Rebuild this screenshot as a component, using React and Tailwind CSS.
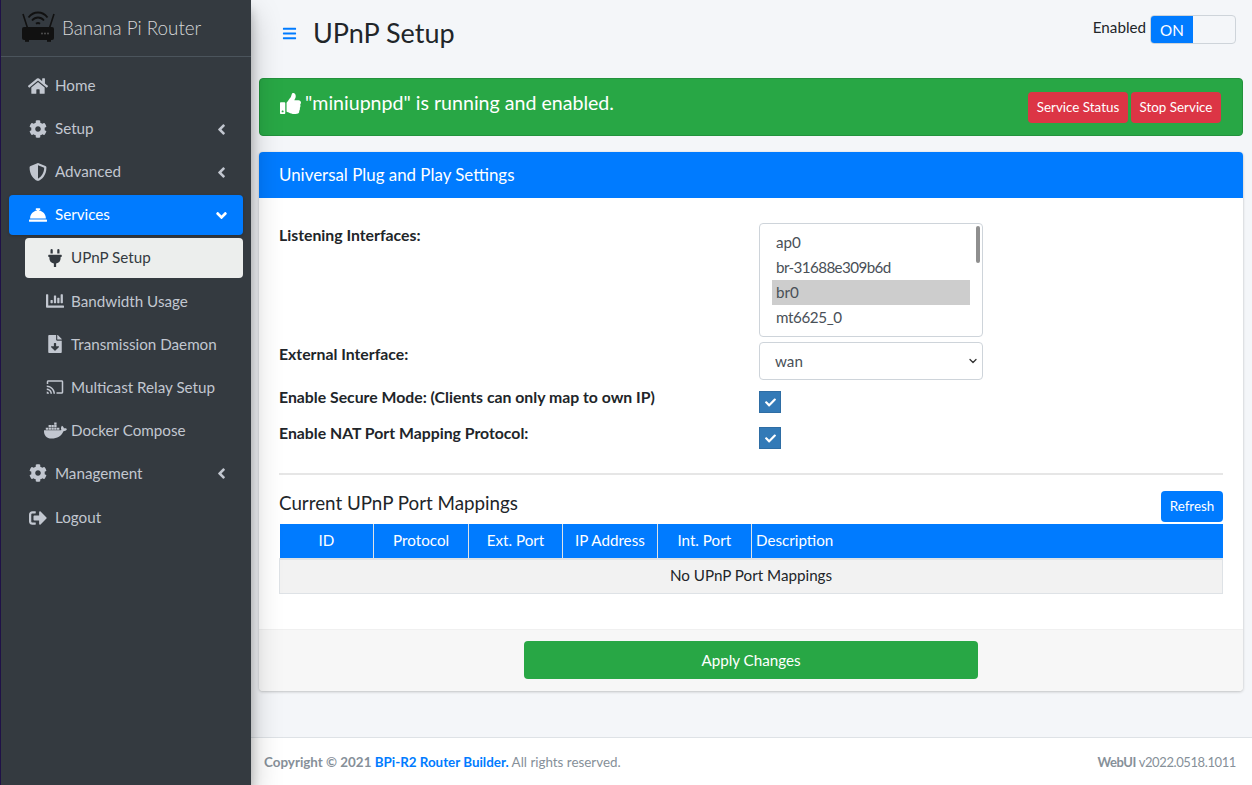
import { FaHome, FaCog, FaShieldAlt, FaConciergeBell, FaPlug, FaChartBar, FaFileDownload, FaChromecast, FaDocker, FaSignOutAlt, FaThumbsUp, FaBars, FaAngleLeft, FaAngleDown, FaCheck } from 'react-icons/fa';
import { ChevronDown } from 'lucide-react';

function RouterLogo() {
  return (
    <svg width="34" height="31" viewBox="0 0 34 31" className="shrink-0 -mt-[3px]">
      <path d="M1 3 L5.5 17 M32 3 L27.5 17" stroke="#111" strokeWidth="1.6" fill="none" />
      <path d="M6.5 6.5 C11.5 -0.2 20.5 -0.2 25.5 6.5" stroke="#111" strokeWidth="1.8" fill="none" />
      <path d="M10 9.5 C13.5 5.5 18.5 5.5 22 9.5" stroke="#111" strokeWidth="1.8" fill="none" />
      <path d="M14 12.8 C15.4 11.6 16.6 11.6 18 12.8" stroke="#111" strokeWidth="1.8" fill="none" />
      <rect x="0" y="16" width="32" height="13" rx="2" fill="#111" />
      <rect x="3" y="29" width="4" height="1.8" fill="#111" />
      <rect x="25" y="29" width="4" height="1.8" fill="#111" />
      <circle cx="20" cy="22.5" r="0.9" fill="#555" />
      <circle cx="23" cy="22.5" r="0.9" fill="#555" />
      <circle cx="26" cy="22.5" r="0.9" fill="#555" />
    </svg>
  );
}

function NavItem({ icon: Icon, label, arrow, iconClass = 'text-[18px]', labelClass = 'pb-[2px]', className = '' }) {
  return (
    <div className={`h-10 mb-[3px] ml-2 mr-2 rounded flex items-center pl-5 pr-[13px] text-[#c2c7d0] ${className}`}>
      <span className="w-[26px] shrink-0 flex"><Icon className={iconClass} /></span>
      <span className={`flex-1 ${labelClass}`}>{label}</span>
      {arrow && <FaAngleLeft className="text-[17px]" />}
    </div>
  );
}

function SubItem({ icon: Icon, label, active, iconClass = 'text-[18px]' }) {
  return (
    <div className={`h-10 mb-[3px] ml-6 mr-2 rounded flex items-center ${active ? 'bg-[#eceeed] text-[#343a40]' : 'text-[#c2c7d0]'}`}>
      <span className="w-[46px] shrink-0 flex justify-center pl-[14px]"><Icon className={iconClass} /></span>
      <span className={active ? 'pb-[2px]' : ''}>{label}</span>
    </div>
  );
}

function Sidebar() {
  return (
    <aside className="w-[251px] shrink-0 bg-[#343a40] border-l border-[#1f1147] shadow-[0_14px_28px_rgba(0,0,0,0.25),0_10px_10px_rgba(0,0,0,0.22)] z-10">
      <div className="h-[57px] border-b border-[#4b545c] flex items-center pl-[21px] gap-[6px] text-[18.8px] font-light text-[rgba(255,255,255,0.8)]">
        <RouterLogo />
        <span className="pb-[1px] font-light">Banana Pi Router</span>
      </div>
      <nav className="pt-[9px]">
        <NavItem icon={FaHome} label="Home" iconClass="text-[20px] -ml-[1px]" />
        <NavItem icon={FaCog} label="Setup" arrow />
        <NavItem icon={FaShieldAlt} label="Advanced" arrow />
        <div className="h-10 mb-[3px] ml-2 mr-2 rounded bg-[#007bff] text-white flex items-center pl-5 pr-[13px] shadow-[0_1px_3px_rgba(0,0,0,0.2)]">
          <span className="w-[26px] shrink-0 flex"><FaConciergeBell className="text-[18px]" /></span>
          <span className="flex-1 pb-[2px]">Services</span>
          <FaAngleDown className="text-[17px]" />
        </div>
        <SubItem icon={FaPlug} label="UPnP Setup" active />
        <SubItem icon={FaChartBar} label="Bandwidth Usage" />
        <SubItem icon={FaFileDownload} label="Transmission Daemon" />
        <SubItem icon={FaChromecast} label="Multicast Relay Setup" />
        <SubItem icon={FaDocker} label="Docker Compose" iconClass="text-[23px]" />
        <NavItem icon={FaCog} label="Management" arrow labelClass="" className="mb-[5px]" />
        <NavItem icon={FaSignOutAlt} label="Logout" labelClass="pb-[2px]" />
      </nav>
    </aside>
  );
}

function CheckBox() {
  return (
    <span className="w-[22px] h-[22px] bg-[#337ab7] border border-[#2e6da4] flex items-center justify-center text-white">
      <FaCheck className="text-[11px]" />
    </span>
  );
}

function Label({ children, className = '' }) {
  return <div className={`w-[480px] shrink-0 font-bold text-[15.8px] ${className}`}>{children}</div>;
}

export default function App() {
  const headers = ['ID', 'Protocol', 'Ext. Port', 'IP Address', 'Int. Port'];
  return (
    <div className="h-screen flex overflow-hidden bg-[#f4f6f9] text-[#212529] text-[15.2px] leading-6 font-['Lato',sans-serif]">
      <Sidebar />
      <main className="flex-1 flex flex-col min-w-0">
        {/* Header */}
        <div className="h-[78px] shrink-0 flex pl-[31px] pr-4">
          <div className="flex items-center h-[66px] flex-1">
            <FaBars className="text-[15px] text-[#007bff] mr-[16px]" />
            <h1 className="text-[27px] leading-[34px]">UPnP Setup</h1>
          </div>
          <div className="flex items-start pt-[15px]">
            <span className="mr-1 leading-[24px]">Enabled</span>
            <div className="w-[86px] h-[29px] border border-[#ced4da] rounded flex overflow-hidden">
              <span className="w-[42px] bg-[#007bff] text-white flex items-center justify-center">ON</span>
            </div>
          </div>
        </div>

        <div className="pl-2 pr-[9px]">
          {/* Status */}
          <div className="h-[58px] bg-[#28a745] border border-[#23923d] rounded flex items-center justify-between pl-5 pr-[21px] text-white">
            <div className="flex items-center gap-1 text-[19.6px] -mt-[8px]">
              <FaThumbsUp className="text-[21px]" />
              <span>"miniupnpd" is running and enabled.</span>
            </div>
            <div className="flex gap-[3px]">
              <button className="h-[31px] w-[100px] bg-[#dc3545] rounded text-[13.4px]">Service Status</button>
              <button className="h-[31px] w-[90px] bg-[#dc3545] rounded text-[13.4px]">Stop Service</button>
            </div>
          </div>

          {/* Settings card */}
          <section className="mt-4 h-[539px] bg-white rounded shadow-[0_0_1px_rgba(0,0,0,0.125),0_1px_3px_rgba(0,0,0,0.2)] flex flex-col overflow-hidden">
            <div className="h-[46px] shrink-0 bg-[#007bff] text-white flex items-center px-5 text-[16.9px]">Universal Plug and Play Settings</div>
            <div className="flex-1 px-5 pt-[25px]">
              <div className="flex">
                <Label>Listening Interfaces:</Label>
                <div className="relative w-[224px] h-[114px] border border-[#ced4da] rounded pt-[6px] pl-3 text-[#495057]">
                  <div className="h-[25px] pl-1 leading-[24px]">ap0</div>
                  <div className="h-[25px] pl-1 leading-[24px] tracking-[-0.6px]">br-31688e309b6d</div>
                  <div className="h-[25px] pl-1 leading-[24px] w-[198px] bg-[#cdcdcd]">br0</div>
                  <div className="h-[25px] pl-1 leading-[24px] tracking-[-0.4px]">mt6625_0</div>
                  <div className="absolute right-[2px] top-[2px] w-[4px] h-[37px] rounded bg-[#8f8f8f]" />
                </div>
              </div>
              <div className="flex mt-[5px] items-start">
                <Label>External Interface:</Label>
                <div className="relative w-[224px] h-[38px]">
                  <select className="w-full h-full appearance-none border border-[#ced4da] rounded bg-white pl-[15px] pb-[1px] text-[#495057]" defaultValue="wan">
                    <option>wan</option>
                    <option>br0</option>
                  </select>
                  <ChevronDown size={12} strokeWidth={2.6} className="absolute right-[4px] top-[13px] text-[#333] pointer-events-none" />
                </div>
              </div>
              <div className="flex mt-[11px]">
                <Label className="-mt-[6px]">Enable Secure Mode: (Clients can only map to own IP)</Label>
                <CheckBox />
              </div>
              <div className="flex mt-[14px]">
                <Label className="-mt-[6px]">Enable NAT Port Mapping Protocol:</Label>
                <CheckBox />
              </div>
              <hr className="mt-[24px] border-t-2 border-[#e6e6e6]" />
              <div className="flex justify-between items-center mt-[13px] h-[36px]">
                <h5 className="text-[18.8px] leading-[28px] pb-[6px]">Current UPnP Port Mappings</h5>
                <button className="h-[31px] w-[62px] bg-[#007bff] text-white rounded text-[13.4px]">Refresh</button>
              </div>
              <table className="w-full table-fixed border-collapse">
                <thead>
                  <tr className="h-[35px] bg-[#007bff] text-white">
                    {headers.map((h) => (
                      <th key={h} className="w-[94.4px] font-normal text-center border-r border-[#dee2e6] border-l-0 p-0 pb-[2px]">{h}</th>
                    ))}
                    <th className="font-normal text-left pl-1 pr-0 pb-[2px]">Description</th>
                  </tr>
                </thead>
                <tbody>
                  <tr className="h-[34px] bg-[#f2f2f2]">
                    <td colSpan={6} className="text-center border border-t-2 border-[#dee2e6] pb-[2px]">No UPnP Port Mappings</td>
                  </tr>
                </tbody>
              </table>
            </div>
            <div className="h-[62px] shrink-0 bg-[#f7f7f7] border-t border-[#f0f0f0] flex justify-center pt-[11px]">
              <button className="w-[454px] h-[38px] bg-[#28a745] text-white rounded">Apply Changes</button>
            </div>
          </section>
        </div>

        {/* Footer */}
        <footer className="mt-auto h-[48px] shrink-0 bg-white border-t border-[#dee2e6] flex items-center justify-between pl-[13px] pr-4 text-[13.4px] text-[#869099]">
          <div><b>Copyright © 2021 <span className="text-[#007bff]">BPi-R2 Router Builder.</span></b> All rights reserved.</div>
          <div className="text-[13px] tracking-[-0.4px]"><b>WebUI</b> v2022.0518.1011</div>
        </footer>
      </main>
    </div>
  );
}
